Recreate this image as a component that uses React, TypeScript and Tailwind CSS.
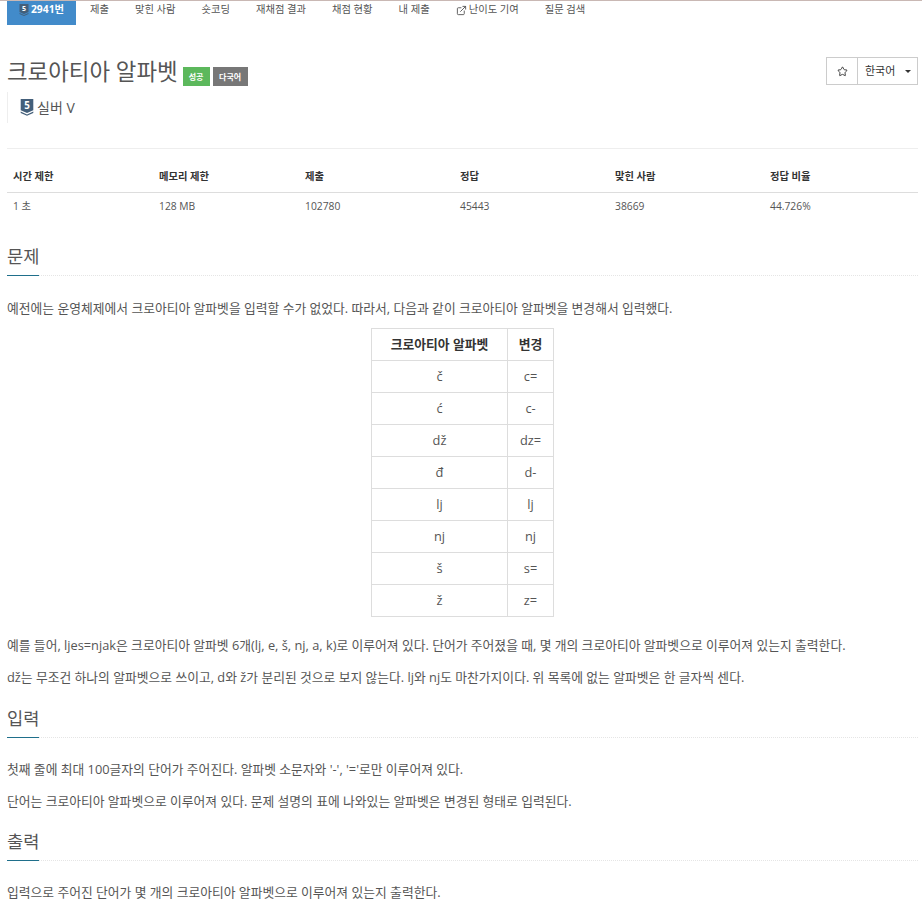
import { ExternalLink, Star } from "lucide-react";

const FONT = "font-['Open_Sans','Noto_Sans_CJK_KR',sans-serif]";

const TABS = ["제출", "맞힌 사람", "숏코딩", "재채점 결과", "채점 현황", "내 제출"];

const STATS = [
  { label: "시간 제한", value: "1 초", w: "w-[146px]" },
  { label: "메모리 제한", value: "128 MB", w: "w-[146px]" },
  { label: "제출", value: "102780", w: "w-[155px]" },
  { label: "정답", value: "45443", w: "w-[155px]" },
  { label: "맞힌 사람", value: "38669", w: "w-[155px]" },
  { label: "정답 비율", value: "44.726%", w: "flex-1" },
];

const ALPHABET = [
  ["č", "c="],
  ["ć", "c-"],
  ["dž", "dz="],
  ["đ", "d-"],
  ["lj", "lj"],
  ["nj", "nj"],
  ["š", "s="],
  ["ž", "z="],
];

function TierBadge({ size }: { size: number }) {
  return (
    <svg width={size} height={size * 1.2} viewBox="0 0 20 24" className="shrink-0">
      <path d="M1 0h18v16l-9 4-9-4z" fill="#435f7a" />
      <path d="M1 18l9 4 9-4v2l-9 4-9-4z" fill="#435f7a" />
      <text x="10" y="14" textAnchor="middle" fontSize="14" fontWeight="700" fill="#fff" fontFamily="Open Sans, sans-serif">
        5
      </text>
    </svg>
  );
}

function Heading({ title }: { title: string }) {
  return (
    <div className="border-b border-dotted border-[#e5e5e5] h-[34px] flex">
      <h2 className="text-[17.6px] leading-[26px] pt-[1px] text-[#555] border-b border-[#1f6f8b] h-[34px] font-normal">{title}</h2>
    </div>
  );
}

export default function App() {
  return (
    <div className={`${FONT} w-[922px] h-[915px] overflow-hidden bg-white text-[#555] text-[12.8px]`}>
      <div className="h-px bg-[#c9b8b4]" />

      {/* tabs */}
      <nav className="flex pl-[7px] h-[24px] text-[10.3px]">
        <div className="w-[69px] h-[24px] bg-[#428bca] text-white font-bold flex items-center justify-center gap-[2px] pb-[6px]">
          <TierBadge size={10} />
          2941번
        </div>
        <div className="flex pb-[6px] items-center">
          <span className="ml-[14px]">{TABS[0]}</span>
          <span className="ml-[26px]">{TABS[1]}</span>
          <span className="ml-[26px]">{TABS[2]}</span>
          <span className="ml-[26px]">{TABS[3]}</span>
          <span className="ml-[26px]">{TABS[4]}</span>
          <span className="ml-[26px]">{TABS[5]}</span>
          <span className="ml-[26px] flex items-center gap-[2px]">
            <ExternalLink size={11} />
            난이도 기여
          </span>
          <span className="ml-[26px]">질문 검색</span>
        </div>
      </nav>

      {/* title */}
      <div className="flex justify-between pl-[7px] pr-[4px] mt-[32px]">
        <div className="flex items-end h-[30px]">
          <h1 className="text-[22.4px] leading-[30px] font-normal text-[#555]">크로아티아 알파벳</h1>
          <span className="ml-[5px] mb-[1px] h-[19px] w-[27px] bg-[#5cb85c] text-white text-[8px] font-bold flex items-center justify-center">성공</span>
          <span className="ml-[3px] mb-[1px] h-[19px] w-[35px] bg-[#777] text-white text-[8px] font-bold flex items-center justify-center">다국어</span>
        </div>
        <div className="flex h-[28px] text-[11px]">
          <div className="w-[32px] border border-[#ccc] flex items-center justify-center">
            <Star size={11} className="text-[#333]" />
          </div>
          <div className="w-[60px] border border-l-0 border-[#ccc] flex items-center pl-[7px] gap-[10px] text-[#333]">
            한국어
            <span className="border-x-[3px] border-x-transparent border-t-[3px] border-t-[#333]" />
          </div>
        </div>
      </div>

      {/* tier */}
      <div className="ml-[7px] mt-[5px] h-[31px] border-l border-[#eee] pl-[12px] flex items-center gap-[3px] text-[14px]">
        <TierBadge size={14} />
        실버 V
      </div>

      <div className="ml-[7px] mr-[4px] mt-[25px] border-t border-[#eee]" />

      {/* stats */}
      <div className="ml-[7px] mr-[4px] mt-[13px] flex border-b border-[#ddd] h-[31px] font-bold text-[#333] text-[10.3px]">
        {STATS.map((s) => (
          <div key={s.label} className={`${s.w} pl-[6px] pt-[7px]`}>
            {s.label}
          </div>
        ))}
      </div>
      <div className="ml-[7px] mr-[4px] flex h-[27px] text-[10.3px] text-[#555]">
        {STATS.map((s) => (
          <div key={s.label} className={`${s.w} pl-[6px] pt-[6px]`}>
            {s.value}
          </div>
        ))}
      </div>

      {/* problem */}
      <section className="ml-[7px] mr-[4px] mt-[22px]">
        <Heading title="문제" />
        <p className="mt-[22px] leading-[20px]">예전에는 운영체제에서 크로아티아 알파벳을 입력할 수가 없었다. 따라서, 다음과 같이 크로아티아 알파벳을 변경해서 입력했다.</p>
        <table className="mx-auto mt-[10px] border-collapse">
          <thead>
            <tr className="h-[32px]">
              <th className="w-[136px] border border-[#ddd] font-bold text-[#333]">크로아티아 알파벳</th>
              <th className="w-[46px] border border-[#ddd] font-bold text-[#333]">변경</th>
            </tr>
          </thead>
          <tbody>
            {ALPHABET.map(([from, to]) => (
              <tr key={to} className="h-[32px]">
                <td className="border border-[#ddd] text-center">{from}</td>
                <td className="border border-[#ddd] text-center">{to}</td>
              </tr>
            ))}
          </tbody>
        </table>
        <p className="mt-[18px] leading-[20px]">예를 들어, ljes=njak은 크로아티아 알파벳 6개(lj, e, š, nj, a, k)로 이루어져 있다. 단어가 주어졌을 때, 몇 개의 크로아티아 알파벳으로 이루어져 있는지 출력한다.</p>
        <p className="mt-[12px] leading-[20px]">dž는 무조건 하나의 알파벳으로 쓰이고, d와 ž가 분리된 것으로 보지 않는다. lj와 nj도 마찬가지이다. 위 목록에 없는 알파벳은 한 글자씩 센다.</p>
      </section>

      {/* input */}
      <section className="ml-[7px] mr-[4px] mt-[17px]">
        <Heading title="입력" />
        <p className="mt-[21px] leading-[20px]">첫째 줄에 최대 100글자의 단어가 주어진다. 알파벳 소문자와 '-', '='로만 이루어져 있다.</p>
        <p className="mt-[12px] leading-[20px]">단어는 크로아티아 알파벳으로 이루어져 있다. 문제 설명의 표에 나와있는 알파벳은 변경된 형태로 입력된다.</p>
      </section>

      {/* output */}
      <section className="ml-[7px] mr-[4px] mt-[16px]">
        <Heading title="출력" />
        <p className="mt-[21px] leading-[20px]">입력으로 주어진 단어가 몇 개의 크로아티아 알파벳으로 이루어져 있는지 출력한다.</p>
      </section>
    </div>
  );
}
